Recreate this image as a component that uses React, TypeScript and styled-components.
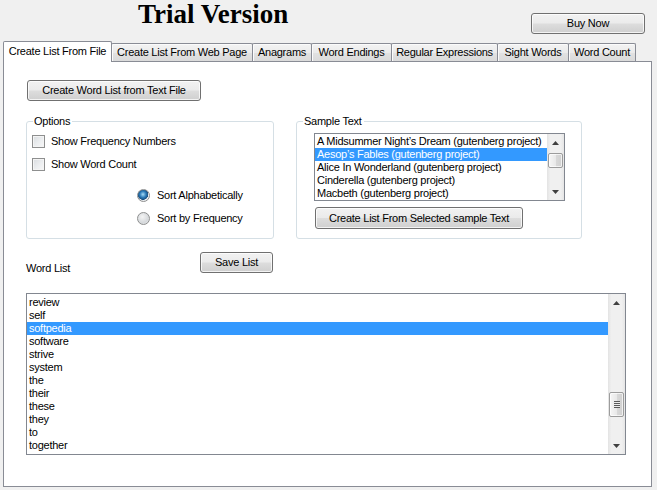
import React from 'react';
import styled, { createGlobalStyle } from 'styled-components';

const GlobalStyle = createGlobalStyle`
  html, body { margin: 0; padding: 0; background: #f0f0f0; }
  body {
    font-family: "Liberation Sans", Arial, sans-serif;
    font-size: 11px;
    letter-spacing: -0.25px;
    color: #000;
  }
  * { box-sizing: border-box; }
`;

const Window = styled.div`
  width: 657px;
  height: 490px;
  display: flex;
  flex-direction: column;
  overflow: hidden;
  background: #f0f0f0;
`;

const Header = styled.header`
  height: 41px;
  display: flex;
  align-items: flex-start;
  padding: 0 12px 0 138px;
`;

const Title = styled.h1`
  flex: 1;
  margin: 1px 0 0;
  font-family: "Liberation Serif", "Times New Roman", serif;
  font-weight: bold;
  font-size: 27px;
  line-height: 27px;
  letter-spacing: 0;
`;

const Button = styled.button<{ $w: number; $h?: number; $mt?: number; $ml?: number }>`
  flex: none;
  width: ${(p) => p.$w}px;
  height: ${(p) => p.$h ?? 21}px;
  margin: ${(p) => p.$mt ?? 0}px 0 0 ${(p) => p.$ml ?? 0}px;
  padding: 0;
  border: 1px solid #707070;
  border-radius: 3px;
  background: linear-gradient(#f2f2f2 0%, #ebebeb 48%, #dddddd 52%, #cfcfcf 100%);
  box-shadow: inset 0 0 0 1px rgba(255, 255, 255, 0.75);
  font: inherit;
  letter-spacing: inherit;
  color: #000;
  text-align: center;
  line-height: 17px;
`;

const TabStrip = styled.div`
  display: flex;
  align-items: flex-end;
  height: 20px;
  padding-left: 3px;
  position: relative;
  z-index: 1;
`;

const Tab = styled.div<{ $active?: boolean; $w: number }>`
  width: ${(p) => p.$w}px;
  height: ${(p) => (p.$active ? 21 : 18)}px;
  margin-bottom: ${(p) => (p.$active ? -1 : 0)}px;
  margin-left: -1px;
  &:first-child { margin-left: 0; }
  border: 1px solid #898c95;
  border-bottom: 0;
  border-radius: 2px 2px 0 0;
  background: ${(p) =>
    p.$active ? '#ffffff' : 'linear-gradient(#f3f3f3 0%, #ebebeb 50%, #e2e2e2 51%, #dadada 100%)'};
  box-shadow: ${(p) => (p.$active ? 'none' : 'inset 1px 1px 0 #fbfbfb')};
  display: flex;
  align-items: ${(p) => (p.$active ? 'flex-start' : 'center')};
  justify-content: center;
  padding-top: ${(p) => (p.$active ? 3 : 0)}px;
  white-space: nowrap;
  line-height: 13px;
`;

const Panel = styled.div`
  margin: 0 5px 0 3px;
  height: 426px;
  border: 1px solid #898c95;
  background: #fff;
  padding: 18px 0 0 22px;
  display: flex;
  flex-direction: column;
  align-items: flex-start;
`;

const GroupsRow = styled.div`
  display: flex;
  gap: 22px;
  margin-top: 14px;
`;

const Group = styled.fieldset<{ $w: number }>`
  width: ${(p) => p.$w}px;
  height: 124px;
  margin: 0;
  padding: 0;
  border: 1px solid #d5dfe5;
  border-radius: 3px;
`;

const Legend = styled.legend`
  margin-left: 6px;
  padding: 0 2px 0 1px;
  line-height: 13px;
`;

const GroupBody = styled.div<{ $pl: number }>`
  display: flex;
  flex-direction: column;
  align-items: flex-start;
  padding-left: ${(p) => p.$pl}px;
`;

const OptionRow = styled.label<{ $mt: number; $ml?: number; $gap: number }>`
  display: flex;
  align-items: center;
  height: 13px;
  line-height: 13px;
  margin: ${(p) => p.$mt}px 0 0 ${(p) => p.$ml ?? 0}px;
  gap: ${(p) => p.$gap}px;
  white-space: nowrap;
`;

const CheckBox = styled.span`
  flex: none;
  width: 13px;
  height: 13px;
  border: 1px solid #8e8f8f;
  background: linear-gradient(135deg, #d9dcdf 0%, #eceef0 55%, #f7f7f7 100%);
  box-shadow: inset 0 0 0 1px #f4f4f4;
`;

const Radio = styled.span<{ $checked?: boolean }>`
  flex: none;
  width: 13px;
  height: 13px;
  border-radius: 50%;
  border: 1px solid #8e8f8f;
  background: ${(p) =>
    p.$checked
      ? 'radial-gradient(circle at 45% 40%, #a6dcf7 0%, #2b7ab8 35%, #1a4f7e 58%, #e9ecef 62%, #f6f7f8 100%)'
      : 'radial-gradient(circle at 40% 35%, #f4f4f4 0%, #d6d9dc 60%, #eceeef 100%)'};
`;

const ListBox = styled.div<{ $w: number; $h: number; $mt?: number }>`
  flex: none;
  width: ${(p) => p.$w}px;
  height: ${(p) => p.$h}px;
  margin-top: ${(p) => p.$mt ?? 0}px;
  border: 1px solid #828790;
  background: #fff;
  display: flex;
`;

const Items = styled.ul<{ $pt: number; $pl: number }>`
  flex: 1;
  margin: 0;
  padding: ${(p) => p.$pt}px 0 0;
  list-style: none;
  overflow: hidden;
  li { padding-left: ${(p) => p.$pl}px; }
`;

const Item = styled.li<{ $selected?: boolean }>`
  height: 13px;
  line-height: 13px;
  white-space: nowrap;
  background: ${(p) => (p.$selected ? '#3399ff' : 'transparent')};
  color: ${(p) => (p.$selected ? '#fff' : '#000')};
`;

const ScrollBar = styled.div`
  flex: none;
  width: 17px;
  display: flex;
  flex-direction: column;
  background: linear-gradient(90deg, #e3e3e3 0%, #f0f0f0 20%, #f0f0f0 80%, #e6e6e6 100%);
`;

const Arrow = styled.div`
  height: 17px;
  flex: none;
  display: flex;
  align-items: center;
  justify-content: center;
`;

const Track = styled.div`
  flex: 1;
`;

const Thumb = styled.div<{ $top: number; $h: number }>`
  margin: ${(p) => p.$top}px 1px 0 1px;
  height: ${(p) => p.$h}px;
  border: 1px solid #9c9c9c;
  border-radius: 2px;
  background: linear-gradient(90deg, #f6f6f6 0%, #e9e9e9 50%, #d9d9d9 51%, #d0d0d0 100%);
  box-shadow: inset 0 0 0 1px rgba(255, 255, 255, 0.7);
  display: flex;
  align-items: center;
  justify-content: center;
`;

const Grip = styled.div`
  width: 6px;
  height: 7px;
  background: repeating-linear-gradient(#5b5b5b 0 1px, #ececec 1px 2px);
`;

const WordRow = styled.div`
  display: flex;
  align-items: flex-start;
  height: 21px;
  margin-top: 13px;
`;

const FieldLabel = styled.div`
  width: 174px;
  padding-top: 10px;
  line-height: 13px;
`;

const Tri = ({ up }: { up?: boolean }) => (
  <svg width="7" height="4" viewBox="0 0 7 4">
    <path d={up ? 'M0 4 L3.5 0 L7 4 Z' : 'M0 0 L7 0 L3.5 4 Z'} fill="#404040" />
  </svg>
);

const Scroll = ({ top, h, grip }: { top: number; h: number; grip?: boolean }) => (
  <ScrollBar>
    <Arrow>
      <Tri up />
    </Arrow>
    <Track>
      <Thumb $top={top} $h={h}>{grip && <Grip />}</Thumb>
    </Track>
    <Arrow>
      <Tri />
    </Arrow>
  </ScrollBar>
);

const tabs = [
  { label: 'Create List From File', w: 109 },
  { label: 'Create List From Web Page', w: 142 },
  { label: 'Anagrams', w: 60 },
  { label: 'Word Endings', w: 81 },
  { label: 'Regular Expressions', w: 107 },
  { label: 'Sight Words', w: 72 },
  { label: 'Word Count', w: 68 },
];

const samples = [
  'A Midsummer Night\u2019s Dream (gutenberg project)',
  'Aesop\u2019s Fables (gutenberg project)',
  'Alice In Wonderland (gutenberg project)',
  'Cinderella (gutenberg project)',
  'Macbeth (gutenberg project)',
];

const words = ['review', 'self', 'softpedia', 'software', 'strive', 'system', 'the', 'their', 'these', 'they', 'to', 'together'];

export default function App() {
  return (
    <>
      <GlobalStyle />
      <Window>
        <Header>
          <Title>Trial Version</Title>
          <Button $w={114} $mt={13}>Buy Now</Button>
        </Header>
        <TabStrip>
          {tabs.map((t, i) => (
            <Tab key={t.label} $w={t.w} $active={i === 0}>
              {t.label}
            </Tab>
          ))}
        </TabStrip>
        <Panel>
          <Button $w={174} $ml={1}>Create Word List from Text File</Button>
          <GroupsRow>
            <Group $w={248}>
              <Legend>Options</Legend>
              <GroupBody $pl={5}>
                <OptionRow $mt={7} $gap={6}>
                  <CheckBox />
                  Show Frequency Numbers
                </OptionRow>
                <OptionRow $mt={10} $gap={6}>
                  <CheckBox />
                  Show Word Count
                </OptionRow>
                <OptionRow $mt={18} $ml={105} $gap={7}>
                  <Radio $checked />
                  Sort Alphabetically
                </OptionRow>
                <OptionRow $mt={10} $ml={105} $gap={7}>
                  <Radio />
                  Sort by Frequency
                </OptionRow>
              </GroupBody>
            </Group>
            <Group $w={286}>
              <Legend>Sample Text</Legend>
              <GroupBody $pl={17}>
                <ListBox $w={251} $h={68} $mt={5}>
                  <Items $pt={1} $pl={2}>
                    {samples.map((s, i) => (
                      <Item key={s} $selected={i === 1}>
                        {s}
                      </Item>
                    ))}
                  </Items>
                  <Scroll top={2} h={15} />
                </ListBox>
                <Button $w={208} $h={22} $mt={6} $ml={1}>
                  Create List From Selected sample Text
                </Button>
              </GroupBody>
            </Group>
          </GroupsRow>
          <WordRow>
            <FieldLabel>Word List</FieldLabel>
            <Button $w={73}>Save List</Button>
          </WordRow>
          <ListBox $w={600} $h={162} $mt={20}>
            <Items $pt={2} $pl={2}>
              {words.map((w, i) => (
                <Item key={w} $selected={i === 2}>
                  {w}
                </Item>
              ))}
            </Items>
            <Scroll top={81} h={25} grip />
          </ListBox>
        </Panel>
      </Window>
    </>
  );
}
